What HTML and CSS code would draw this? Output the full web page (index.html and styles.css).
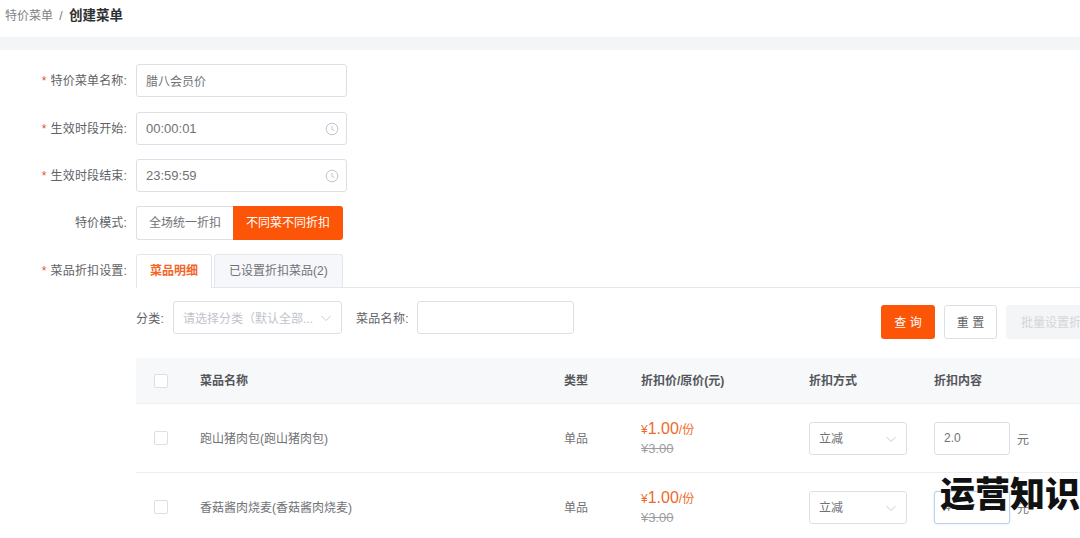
FILE: index.html
```html
<!DOCTYPE HTML>
<html>
<head>
    <meta charset="UTF-8" />
    <title>创建菜单</title>
    <link rel="stylesheet" href="styles.css">
</head>

<body>
    <div class="crumbs">
        <span class="crumb">特价菜单</span>
        <span class="crumb-sep">/</span>
        <span class="crumb-now">创建菜单</span>
    </div>
    <div class="band"></div>

    <div class="form">
        <div class="row">
            <label class="label"><i>*</i>特价菜单名称:</label>
            <div class="input wide">腊八会员价</div>
        </div>
        <div class="row">
            <label class="label"><i>*</i>生效时段开始:</label>
            <div class="input wide time">00:00:01
                <svg class="clock" viewBox="0 0 14 14"><circle cx="7" cy="7" r="5.8"/><path d="M7 3.8V7.3L9.3 8.6"/></svg>
            </div>
        </div>
        <div class="row">
            <label class="label"><i>*</i>生效时段结束:</label>
            <div class="input wide time">23:59:59
                <svg class="clock" viewBox="0 0 14 14"><circle cx="7" cy="7" r="5.8"/><path d="M7 3.8V7.3L9.3 8.6"/></svg>
            </div>
        </div>
        <div class="row">
            <label class="label">特价模式:</label>
            <div class="radio-group">
                <div class="radio">全场统一折扣</div>
                <div class="radio on">不同菜不同折扣</div>
            </div>
        </div>
        <div class="row tabs-row">
            <label class="label"><i>*</i>菜品折扣设置:</label>
            <div class="tabs">
                <div class="tab on">菜品明细</div>
                <div class="tab">已设置折扣菜品(2)</div>
            </div>
        </div>

        <div class="detail">
            <div class="filter">
                <span class="filter-label">分类:</span>
                <div class="input select-cat"><span class="ph">请选择分类（默认全部...</span>
                    <svg class="chev" viewBox="0 0 12 12"><path d="M1.5 4L6 8.5L10.5 4"/></svg>
                </div>
                <span class="filter-label name-label">菜品名称:</span>
                <div class="input name-input"></div>
                <div class="actions">
                    <button class="btn primary">查 询</button>
                    <button class="btn">重 置</button>
                    <button class="btn off">批量设置折扣</button>
                </div>
            </div>

            <div class="tr head">
                <div class="cb-cell"><span class="cb"></span></div>
                <div class="txt">菜品名称</div>
                <div class="txt">类型</div>
                <div class="txt">折扣价/原价(元)</div>
                <div class="txt">折扣方式</div>
                <div class="txt">折扣内容</div>
            </div>
            <div class="tr">
                <div class="cb-cell"><span class="cb"></span></div>
                <div class="txt">跑山猪肉包(跑山猪肉包)</div>
                <div class="txt">单品</div>
                <div class="price"><b><small>¥</small>1.00<small>/份</small></b><s>¥3.00</s></div>
                <div><div class="input select-way">立减
                    <svg class="chev" viewBox="0 0 12 12"><path d="M1.5 4L6 8.5L10.5 4"/></svg>
                </div></div>
                <div class="amount"><div class="input num">2.0</div>元</div>
            </div>
            <div class="tr">
                <div class="cb-cell"><span class="cb"></span></div>
                <div class="txt">香菇酱肉烧麦(香菇酱肉烧麦)</div>
                <div class="txt">单品</div>
                <div class="price"><b><small>¥</small>1.00<small>/份</small></b><s>¥3.00</s></div>
                <div><div class="input select-way">立减
                    <svg class="chev" viewBox="0 0 12 12"><path d="M1.5 4L6 8.5L10.5 4"/></svg>
                </div></div>
                <div class="amount"><div class="input num focus">4</div>元</div>
            </div>
        </div>
    </div>

    <div class="mark">运营知识</div>
</body>

</html>
```

FILE: styles.css
```css
html, body {
    height: 100%;
    overflow: hidden;
}
body {
    margin: 0;
    width: 1080px;
    height: 538px;
    position: relative;
    background: #ffffff;
    color: #606266;
    font-family: "Liberation Sans", "Noto Sans CJK SC", sans-serif;
    font-size: 12px;
}

.crumbs {
    height: 37px;
    padding: 8px 0 0 5px;
    box-sizing: border-box;
    line-height: 16px;
}
.crumb {
    color: #7d7f84;
}
.crumb-sep {
    margin: 0 3px 0 3px;
    color: #777777;
}
.crumb-now {
    color: #303133;
    font-size: 13.5px;
    font-weight: bold;
}
.band {
    height: 13px;
    background: #f4f5f7;
}

.form {
    padding-top: 14px;
}
.row {
    display: flex;
    align-items: center;
    height: 33px;
    margin-bottom: 14px;
}
.row:first-child {
    margin-bottom: 15px;
}
.label {
    width: 127px;
    margin-right: 9px;
    padding-bottom: 2px;
    text-align: right;
    color: #606266;
    letter-spacing: 0.15px;
    flex: none;
}
.label i {
    color: #e4572e;
    font-style: normal;
    margin-right: 4px;
}

.input {
    position: relative;
    display: flex;
    align-items: center;
    box-sizing: border-box;
    height: 33px;
    padding: 0 9px;
    border: 1px solid #dcdfe6;
    border-radius: 3px;
    background: #ffffff;
    color: #707276;
}
.wide {
    width: 211px;
}
.time {
    font-size: 13px;
}
.clock {
    position: absolute;
    right: 7px;
    top: 9px;
    width: 14px;
    height: 14px;
    fill: none;
    stroke: #c0c4cc;
    stroke-width: 1;
}
.chev {
    position: absolute;
    right: 9px;
    top: 10px;
    width: 12px;
    height: 12px;
    fill: none;
    stroke: #c8ccd3;
    stroke-width: 1;
}

.radio-group {
    display: flex;
    height: 34px;
}
.radio {
    display: flex;
    align-items: center;
    justify-content: center;
    box-sizing: border-box;
    width: 97px;
    padding-bottom: 2px;
    border: 1px solid #dcdfe6;
    border-right: 0;
    border-radius: 3px 0 0 3px;
    color: #707276;
}
.radio.on {
    width: 110px;
    border: 0;
    border-radius: 0 3px 3px 0;
    background: #fc5507;
    color: #ffffff;
}

.tabs-row {
    align-items: flex-start;
    height: 34px;
    margin-top: 15px;
    margin-bottom: 0;
}
.tabs-row .label {
    line-height: 35px;
}
.tabs {
    display: flex;
    gap: 2px;
    flex: 1;
    height: 34px;
    box-sizing: border-box;
    border-bottom: 1px solid #e4e7ed;
}
.tab {
    box-sizing: border-box;
    height: 33px;
    padding: 0 14px;
    line-height: 33px;
    border: 1px solid #e4e7ed;
    border-bottom: 0;
    border-radius: 3px 3px 0 0;
    background: #f5f7fa;
    color: #707276;
    white-space: nowrap;
}
.tab.on {
    width: 76px;
    height: 34px;
    padding: 0;
    text-align: center;
    background: #ffffff;
    color: #f2662a;
    font-weight: bold;
}

.detail {
    margin-left: 136px;
    width: 972px;
}
.filter {
    display: flex;
    align-items: center;
    height: 34px;
    margin-top: 12px;
    margin-bottom: 24px;
}
.filter-label {
    width: 37px;
    flex: none;
    letter-spacing: 0.3px;
}
.name-label {
    width: 61px;
    margin-left: 14px;
}
.select-cat {
    width: 169px;
}
.ph {
    color: #c0c4cc;
}
.name-input {
    width: 157px;
}
.actions {
    display: flex;
    gap: 9px;
    margin-left: auto;
    margin-top: 9px;
}
.btn {
    box-sizing: border-box;
    height: 34px;
    width: 53px;
    padding: 0;
    border: 1px solid #dcdfe6;
    border-radius: 3px;
    background: #ffffff;
    color: #606266;
    font-family: inherit;
    font-size: 12px;
}
.btn.primary {
    width: 54px;
    border: 0;
    background: #fc5507;
    color: #ffffff;
}
.btn.off {
    width: 102px;
    border: 0;
    background: #f4f5f7;
    color: #d3d5d9;
    white-space: nowrap;
}

.tr {
    display: grid;
    grid-template-columns: 64px 364px 77px 168px 125px 1fr;
    align-items: center;
    height: 69px;
    box-sizing: border-box;
    border-bottom: 1px solid #ebeef5;
    color: #707276;
}
.tr.head {
    height: 46px;
    background: #f7f8fa;
    border-bottom: 1px solid #eef0f3;
    color: #54565a;
    font-weight: bold;
}
.txt {
    padding-bottom: 2px;
}
.cb-cell {
    padding-left: 18px;
    display: flex;
}
.cb {
    width: 14px;
    height: 14px;
    box-sizing: border-box;
    border: 1px solid #dcdfe6;
    border-radius: 2px;
    background: #ffffff;
}

.price b {
    display: block;
    color: #ee6a2a;
    font-size: 16px;
    font-weight: normal;
    line-height: 20px;
}
.price small {
    font-size: 12px;
}
.price s {
    display: block;
    color: #9b9da1;
    font-size: 13px;
    line-height: 18px;
}
.select-way {
    width: 98px;
    padding-bottom: 2px;
}
.amount {
    display: flex;
    align-items: center;
    gap: 7px;
}
.num {
    width: 76px;
}
.num.focus {
    border-color: #b9d3ee;
    box-shadow: 0 0 2px #c9def2;
}

.mark {
    position: absolute;
    left: 940px;
    top: 472px;
    color: #111111;
    font-family: "Noto Sans CJK SC", sans-serif;
    font-size: 35px;
    font-weight: 900;
    line-height: 40px;
    white-space: nowrap;
    text-shadow: 0 0 2px #ffffff;
}
```
